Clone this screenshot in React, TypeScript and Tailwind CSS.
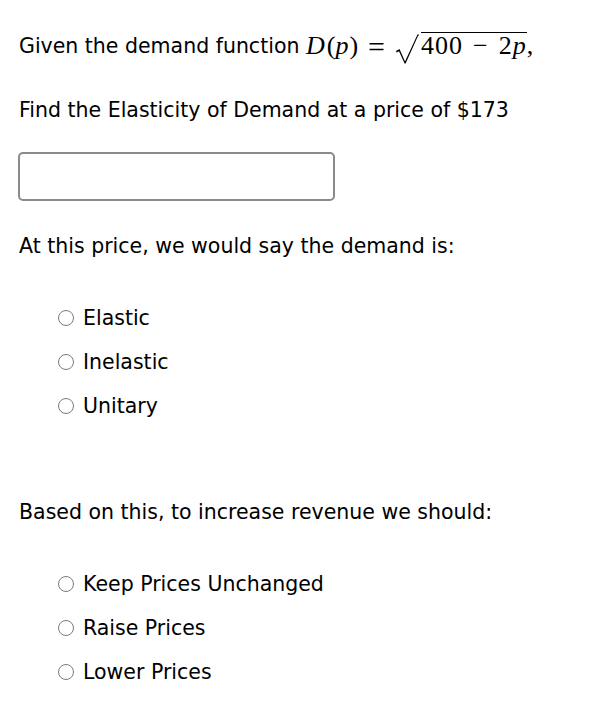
import React from "react";

function Radio({ label }: { label: string }) {
  return (
    <label className="flex items-center gap-[9px] h-[44px]">
      <span className="w-[16px] h-[16px] rounded-full border border-[#7a7a7a] bg-white" />
      <span>{label}</span>
    </label>
  );
}

function Sqrt() {
  return (
    <svg width="24" height="30" viewBox="0 0 24 30" className="block">
      <path
        d="M1 17 L4.5 15 L10 27.5 L22.5 0.6 L24 0.6 L24 1.6 L23.2 1.6 L10.6 29.5 L9.6 29.5 L4 17.3 L1.6 18.4 Z"
        fill="black"
      />
    </svg>
  );
}

export default function App() {
  return (
    <div
      className="w-[602px] h-[714px] bg-white text-black text-[20.5px] leading-[24px] pl-[19px]"
      style={{ fontFamily: "Tahoma, 'DejaVu Sans', Verdana, sans-serif" }}
    >
      {/* Question */}
      <div className="pt-[34px] flex items-end h-[58px]">
        <span>Given the demand function&nbsp;</span>
        <span className="font-['Liberation_Serif',serif] text-[26px] leading-[24px] flex items-end">
          <i className="mr-[2px]">D</i>
          <span>(</span>
          <i className="mr-[1px]">p</i>
          <span>)</span>
          <span className="mx-[10px] text-[30px] leading-[24px] relative top-[1px]">=</span>
          <span className="relative top-[6px] mr-[2px]">
            <Sqrt />
          </span>
          <span className="border-t-[1.5px] border-black pt-[1px] tracking-[1px]">
            400<span className="mx-[10px]">−</span>2<i>p</i>
          </span>
          <span>,</span>
        </span>
      </div>

      <p className="mt-[40px]">Find the Elasticity of Demand at a price of $173</p>

      <input
        type="text"
        className="mt-[30px] -ml-[1px] block w-[317px] h-[49px] rounded-[5px] border-2 border-[#8a8a8a] outline-none"
      />

      <p className="mt-[33px]">At this price, we would say the demand is:</p>

      <div className="mt-[38px] pl-[39px]">
        <Radio label="Elastic" />
        <Radio label="Inelastic" />
        <Radio label="Unitary" />
      </div>

      <p className="mt-[72px]">Based on this, to increase revenue we should:</p>

      <div className="mt-[38px] pl-[39px]">
        <Radio label="Keep Prices Unchanged" />
        <Radio label="Raise Prices" />
        <Radio label="Lower Prices" />
      </div>
    </div>
  );
}
